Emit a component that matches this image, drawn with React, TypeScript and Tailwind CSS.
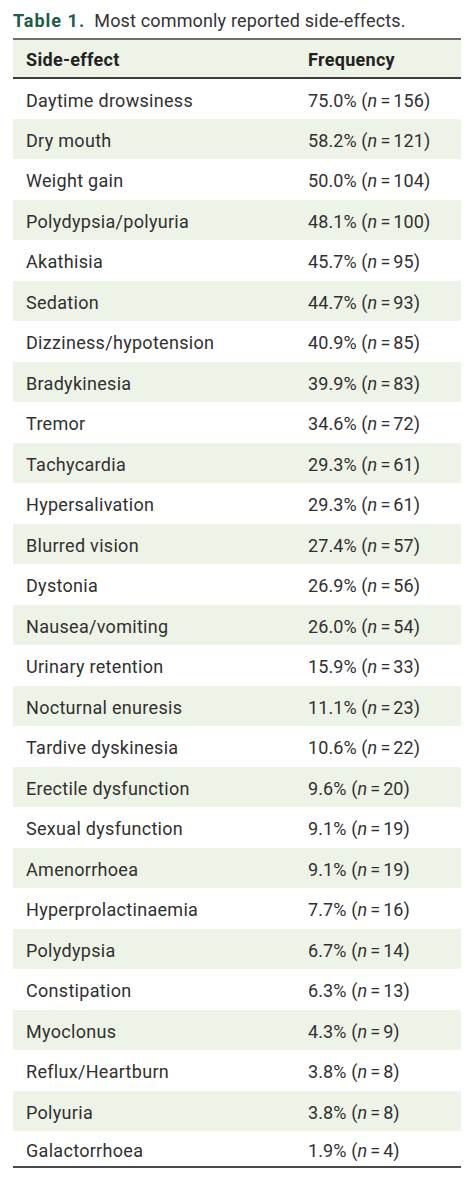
import React from 'react';

type Row = { effect: string; pct: string; n: number };

const rows: Row[] = [
  { effect: 'Daytime drowsiness', pct: '75.0%', n: 156 },
  { effect: 'Dry mouth', pct: '58.2%', n: 121 },
  { effect: 'Weight gain', pct: '50.0%', n: 104 },
  { effect: 'Polydypsia/polyuria', pct: '48.1%', n: 100 },
  { effect: 'Akathisia', pct: '45.7%', n: 95 },
  { effect: 'Sedation', pct: '44.7%', n: 93 },
  { effect: 'Dizziness/hypotension', pct: '40.9%', n: 85 },
  { effect: 'Bradykinesia', pct: '39.9%', n: 83 },
  { effect: 'Tremor', pct: '34.6%', n: 72 },
  { effect: 'Tachycardia', pct: '29.3%', n: 61 },
  { effect: 'Hypersalivation', pct: '29.3%', n: 61 },
  { effect: 'Blurred vision', pct: '27.4%', n: 57 },
  { effect: 'Dystonia', pct: '26.9%', n: 56 },
  { effect: 'Nausea/vomiting', pct: '26.0%', n: 54 },
  { effect: 'Urinary retention', pct: '15.9%', n: 33 },
  { effect: 'Nocturnal enuresis', pct: '11.1%', n: 23 },
  { effect: 'Tardive dyskinesia', pct: '10.6%', n: 22 },
  { effect: 'Erectile dysfunction', pct: '9.6%', n: 20 },
  { effect: 'Sexual dysfunction', pct: '9.1%', n: 19 },
  { effect: 'Amenorrhoea', pct: '9.1%', n: 19 },
  { effect: 'Hyperprolactinaemia', pct: '7.7%', n: 16 },
  { effect: 'Polydypsia', pct: '6.7%', n: 14 },
  { effect: 'Constipation', pct: '6.3%', n: 13 },
  { effect: 'Myoclonus', pct: '4.3%', n: 9 },
  { effect: 'Reflux/Heartburn', pct: '3.8%', n: 8 },
  { effect: 'Polyuria', pct: '3.8%', n: 8 },
  { effect: 'Galactorrhoea', pct: '1.9%', n: 4 },
];

export default function App() {
  return (
    <div className="w-[474px] min-h-[1183px] bg-white px-[13px] font-['Roboto',sans-serif] text-[#303030]">
      {/* Caption */}
      <div className="h-[38px] pt-[9px] text-[18px] leading-[24px] whitespace-pre">
        <span className="font-bold tracking-[1px] text-[#1d5c49]">Table 1.</span>
        <span className="tracking-[0.15px] text-[#333]">{'  '}Most commonly reported side-effects.</span>
      </div>

      <table className="w-full border-collapse table-fixed text-[18px] tracking-[0.3px]">
        <colgroup>
          <col className="w-[295px]" />
          <col />
        </colgroup>
        <thead>
          <tr className="h-[39px] bg-[#eef3e7] border-t-2 border-t-[#6e6e6e] border-b-2 border-b-[#3c3c3c]">
            <th className="pl-[13px] pt-[2px] text-left font-bold text-[#222]">Side-effect</th>
            <th className="pt-[2px] text-left font-bold text-[#222]">Frequency</th>
          </tr>
        </thead>
        <tbody>
          {rows.map((r, i) => {
            const last = i === rows.length - 1;
            return (
              <tr
                key={r.effect}
                className={
                  (last ? 'h-[36px] border-b-2 border-b-[#4a4a4a] ' : 'h-[40.5px] ') +
                  (i % 2 === 1 ? 'bg-[#eef3e7]' : 'bg-white')
                }
              >
                <td className="pl-[13px] pt-[3px] align-middle">{r.effect}</td>
                <td className="pt-[3px] align-middle whitespace-nowrap tracking-[0.1px]">
                  {r.pct} (<i>n</i>
                  <span className="tracking-normal">&#8198;=&#8198;</span>
                  {r.n})
                </td>
              </tr>
            );
          })}
        </tbody>
      </table>
    </div>
  );
}
